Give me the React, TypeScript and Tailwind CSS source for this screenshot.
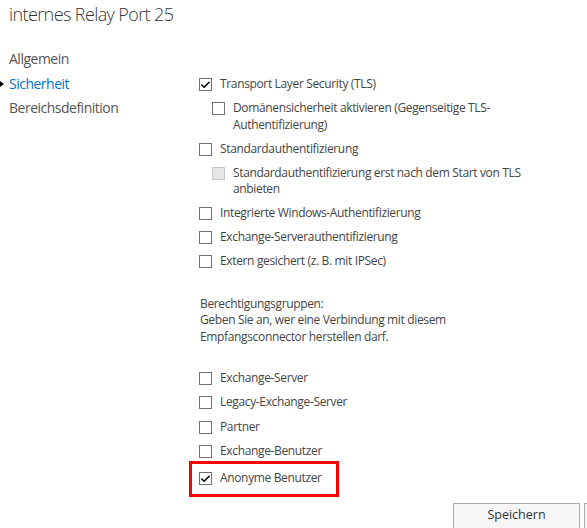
import { Check } from "lucide-react";

type Item = {
  label: React.ReactNode;
  checked?: boolean;
  disabled?: boolean;
  indent?: boolean;
};

const authItems: Item[] = [
  { label: "Transport Layer Security (TLS)", checked: true },
  {
    label: (
      <>
        Domänensicherheit aktivieren (Gegenseitige TLS-
        <br />
        Authentifizierung)
      </>
    ),
    indent: true,
  },
  { label: "Standardauthentifizierung" },
  {
    label: (
      <>
        Standardauthentifizierung erst nach dem Start von TLS
        <br />
        anbieten
      </>
    ),
    indent: true,
    disabled: true,
  },
  { label: "Integrierte Windows-Authentifizierung" },
  { label: "Exchange-Serverauthentifizierung" },
  { label: "Extern gesichert (z. B. mit IPSec)" },
];

const groups = ["Exchange-Server", "Legacy-Exchange-Server", "Partner", "Exchange-Benutzer"];

function Box({ checked, disabled }: { checked?: boolean; disabled?: boolean }) {
  return (
    <span
      className={
        disabled
          ? "mt-[2px] flex h-[13px] w-[13px] shrink-0 border border-[#c6c6c6] bg-[#e6e6e6]"
          : "mt-[2px] flex h-[13px] w-[13px] shrink-0 items-center justify-center border border-[#707070] bg-white"
      }
    >
      {checked && <Check size={12} strokeWidth={3.4} className="text-black" />}
    </span>
  );
}

function Row({ item }: { item: Item }) {
  return (
    <div className={"flex gap-[8px] " + (item.indent ? "pl-[13px]" : "")}>
      <Box checked={item.checked} disabled={item.disabled} />
      <span className="leading-[16.5px]">{item.label}</span>
    </div>
  );
}

export default function App() {
  return (
    <div
      className="h-[528px] w-[587px] overflow-hidden bg-white text-[#444]"
      style={{ fontFamily: '"Open Sans", "Noto Sans", sans-serif' }}
    >
      <h1 className="pl-[9px] pt-[1px] text-[18px] font-light leading-[26px] tracking-[-0.6px] text-[#333]">
        internes Relay Port 25
      </h1>

      <div className="mt-[20px] flex">
        {/* navigation */}
        <nav className="w-[199px] shrink-0 text-[14px] tracking-[-0.5px]">
          <div className="pl-[9px] leading-[24.5px] text-[#555]">Allgemein</div>
          <div className="relative pl-[9px] leading-[24.5px] text-[#0072c6]">
            <span className="absolute left-0 top-[9px] h-0 w-0 border-y-[3.5px] border-l-[4px] border-y-transparent border-l-black" />
            Sicherheit
          </div>
          <div className="pl-[9px] leading-[24.5px] text-[#555]">Bereichsdefinition</div>
        </nav>

        {/* content */}
        <div className="flex-1 pt-[29px] text-[12px] tracking-[-0.35px]">
          <div className="flex flex-col gap-[7.5px]">
            {authItems.map((item, i) => (
              <Row key={i} item={item} />
            ))}
          </div>

          <p className="mt-[26px] pl-[1px] leading-[16.7px]">
            Berechtigungsgruppen:
            <br />
            Geben Sie an, wer eine Verbindung mit diesem
            <br />
            Empfangsconnector herstellen darf.
          </p>

          <div className="mt-[24px] flex flex-col gap-[8px]">
            {groups.map((g) => (
              <Row key={g} item={{ label: g }} />
            ))}
          </div>

          <div className="-ml-[10px] mt-[1px] flex h-[36px] w-[150px] items-center border-[3px] border-[#ff0000] pl-[7px]">
            <div className="flex gap-[8px]">
              <Box checked />
              <span className="leading-[16.5px]">Anonyme Benutzer</span>
            </div>
          </div>
        </div>
      </div>

      {/* buttons */}
      <div className="mt-[6px] flex justify-end gap-[4px]">
        <button className="h-[30px] w-[127px] border border-[#ababab] bg-[#f6f6f6] pb-[4px] text-[12.5px] text-[#333]">
          Speichern
        </button>
        <button className="h-[30px] w-[3px] border-y border-l border-[#ababab] bg-[#f6f6f6]" />
      </div>
    </div>
  );
}
